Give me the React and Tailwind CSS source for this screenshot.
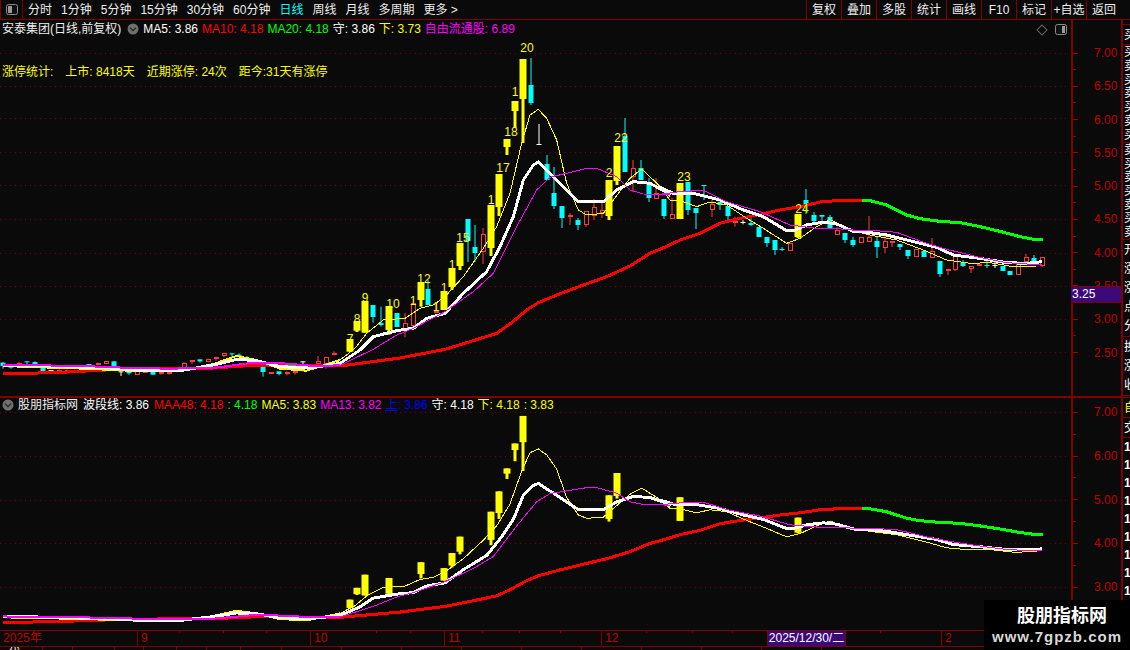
const FONT = { fontFamily: '"Liberation Sans", "Noto Sans CJK SC", sans-serif' };
const z = (ox, oy, pts) => pts.map(([x, y]) => [ox + x / 3, oy + y / 3]);
const Y = '#ffff00', C = '#00ffff', R = '#ff3c3c', W = '#ffffff';

// zoom-space candles: [x, hi, top, bot, lo, type]
const groupLeft = [[10,66,68,78,86,'c'],[34,78,80,80,86,'c'],[58,66,68,74,74,'r'],[82,64,64,66,72,'c'],[106,64,66,74,74,'c'],[130,80,80,96,96,'c'],[154,90,90,91,96,'w'],[178,88,90,96,96,'r'],[202,88,90,96,96,'r'],[268,72,72,80,86,'c'],[295,68,70,76,76,'r'],[319,64,64,72,72,'r'],[343,64,64,88,88,'c'],[364,94,94,95,108,'w'],[388,94,94,100,104,'c'],[412,94,94,104,104,'r'],[436,92,94,94,98,'r'],[460,94,94,104,104,'c'],[484,96,96,100,104,'r'],[508,96,96,96,104,'r'],[553,66,70,84,84,'r'],[577,60,60,66,72,'r'],[601,58,58,64,68,'c'],[625,56,58,66,66,'r'],[648,50,52,58,62,'r'],[673,38,40,48,52,'r'],[697,40,40,42,52,'c'],[718,40,44,50,50,'c'],[742,48,52,60,60,'c'],[766,68,68,74,74,'c'],[790,78,78,96,110,'c'],[814,96,96,102,102,'r'],[838,94,94,102,106,'c'],[862,94,96,102,106,'r'],[886,92,92,96,104,'r'],[908,64,64,94,94,'w'],[955,48,64,72,76,'r'],[979,50,52,72,86,'r'],[1003,34,40,46,46,'r']];
const groupMid = [[61,897,897,935,935,'y'],[82,843,843,872,876,'y'],[106,783,783,878,878,'y'],[130,795,795,831,848,'c'],[154,800,849,855,860,'c'],[178,798,798,870,884,'y'],[202,819,819,861,861,'c'],[226,819,849,870,892,'r'],[250,789,789,858,870,'r'],[272,726,726,780,800,'y'],[295,720,747,795,795,'c'],[319,790,812,819,819,'r'],[343,753,753,810,810,'y'],[367,684,684,741,750,'y'],[391,609,609,678,690,'y'],[415,537,537,603,666,'c'],[436,555,621,639,666,'c'],[460,564,583,636,672,'r'],[484,495,495,624,648,'y'],[508,402,402,501,528,'y'],[532,297,297,321,345,'y'],[556,183,183,213,264,'y'],[580,57,57,177,309,'y'],[604,54,135,189,195,'c'],[628,252,312,314,315,'w'],[650,345,372,420,420,'c'],[673,381,459,498,507,'c'],[697,498,498,534,564,'c'],[721,519,525,531,555,'r'],[745,534,540,555,570,'c'],[769,513,513,555,561,'r'],[793,477,501,528,540,'r'],[815,489,510,519,534,'r'],[838,420,420,528,540,'y'],[862,318,318,423,435,'y'],[886,234,288,396,396,'c'],[910,360,384,411,456,'r'],[934,360,384,420,420,'c'],[958,414,426,474,486,'c'],[979,414,459,477,477,'r']];
const groupRight = [[13,117,117,168,177,'c'],[37,114,162,177,177,'r'],[61,69,69,177,177,'y'],[85,66,66,150,165,'c'],[109,144,144,159,207,'c'],[133,75,75,76,120,'c'],[157,108,132,150,171,'r'],[179,125,125,135,150,'c'],[203,138,138,168,180,'c'],[226,170,184,185,200,'r'],[249,180,186,187,193,'w'],[274,175,189,195,198,'c'],[298,201,201,231,231,'c'],[322,231,231,249,261,'c'],[344,240,240,270,285,'c'],[367,261,267,268,273,'c'],[391,249,249,273,273,'r'],[415,162,162,231,234,'y'],[439,87,120,138,162,'c'],[463,156,165,183,192,'c'],[487,165,165,170,186,'c'],[511,165,171,204,207,'c'],[532,200,210,225,225,'r'],[556,219,219,240,249,'c'],[580,231,240,255,261,'c'],[604,231,231,249,249,'r'],[628,168,231,246,246,'r'],[652,231,243,261,294,'c'],[676,225,243,264,279,'r'],[697,243,243,249,261,'r'],[721,252,252,261,270,'c'],[745,270,270,288,297,'c'],[769,267,267,291,291,'r'],[793,273,273,291,291,'c'],[817,234,273,294,294,'r'],[841,303,303,342,351,'c'],[865,328,328,333,345,'r'],[886,285,285,330,333,'r'],[910,300,307,318,321,'c'],[934,318,318,328,339,'r'],[958,312,312,318,318,'r'],[982,303,315,316,324,'c'],[1006,306,315,316,324,'w'],[1030,318,318,333,333,'c'],[1051,333,333,345,345,'c'],[1075,306,306,345,345,'r'],[1099,282,291,306,306,'r'],[1123,285,294,315,315,'c'],[1147,291,291,318,321,'r']];
const conv = (ox, oy, arr) => arr.map(([x, h, t, b, l, k]) => ({ x: Math.round(ox + x / 3), h: oy + h / 3, t: oy + t / 3, b: oy + b / 3, l: oy + l / 3, k }));
const candles = [...conv(0, 340, groupLeft), ...conv(330, 40, groupMid), ...conv(660, 160, groupRight)];

const redPts = [...z(0,340,[[10,102],[80,100],[180,97],[320,90],[530,84],[640,84],[760,76],[830,76]]), [340,366], [400,358], ...z(330,40,[[345,928],[420,905],[500,880],[545,848],[590,810],[625,788],[680,765],[760,735],[830,710],[900,678],[960,640],[1020,615]]), ...z(660,160,[[0,268],[60,240],[120,220],[180,190],[240,175],[300,163],[360,150],[420,140],[480,126],[540,121],[605,122]])];
const greenPts = z(660,160,[[605,122],[630,122],[680,135],[740,165],[780,176],[840,184],[900,188],[960,200],[1020,214],[1080,230],[1120,238],[1148,240]]);
const greenShort = z(0,340,[[838,78],[930,78]]);
const whiteLeft = z(0,340,[[10,76],[100,76],[200,80],[330,84],[430,92],[540,92],[640,75],[710,58],[770,62],[840,80],[930,84],[1020,70]]);
const whitePts = [...whiteLeft, ...z(330,40,[[90,930],[130,890],[200,872],[250,865],[290,835],[345,820],[400,760],[470,695],[510,620],[550,530],[580,420],[610,375],[625,366],[680,420],[745,485],[820,485],[860,450],[910,425],[960,430],[1020,462]]), ...z(660,160,[[0,82],[40,100],[100,100],[180,120],[250,150],[310,170],[380,212],[400,212],[440,195],[490,186],[530,192],[580,214],[630,218],[680,225],[760,245],[830,262],[880,285],[960,295],[1040,308],[1100,310],[1147,305]])];
const yellowLeft = z(0,340,[[10,78],[120,82],[200,84],[340,90],[430,94],[540,92],[640,72],[710,48],[770,60],[840,86],[920,92],[1020,60]]);
const yellowPts = [...yellowLeft, ...z(330,40,[[75,925],[110,880],[160,840],[225,835],[270,805],[310,795],[345,770],[400,710],[460,625],[500,560],[540,460],[575,310],[600,225],[625,208],[650,235],[680,300],[710,430],[745,510],[770,525],[820,520],[850,480],[900,415],[935,387],[970,420],[1020,470]]), ...z(660,160,[[0,80],[30,120],[70,125],[110,140],[150,126],[200,135],[260,175],[310,205],[380,250],[420,235],[470,200],[510,178],[570,210],[630,225],[710,240],[790,270],[860,300],[930,310],[990,308],[1060,320],[1130,318]])];
const magentaLeft = z(0,340,[[10,74],[120,76],[250,78],[340,82],[500,86],[640,84],[760,68],[850,70],[940,78],[1020,76]]);
const magentaPts = [...magentaLeft, ...z(330,40,[[130,928],[200,885],[250,865],[345,815],[430,755],[490,700],[560,560],[620,450],[660,412],[770,385],[800,385],[860,410],[900,450],[940,462],[1020,465]]), ...z(660,160,[[0,103],[60,95],[130,91],[200,125],[300,155],[390,195],[470,205],[520,205],[600,212],[660,213],[710,217],[800,250],[860,268],[950,290],[1040,308],[1100,312],[1147,312]])];

const labels = [['7',350,339],['8',357,319],['9',365,298],['10',393,304],['1',413,301],['12',424,279],['1',436,307],['1',444,288],['1',452,265],['15',463,238],['1',491,200],['17',503,168],['18',511,132],['1',515,92],['20',527,48],['2',609,173],['22',621,138],['23',684,177],['24',802,209]];

const Line = ({ pts, map, color, w }) => (
  <polyline points={pts.map(([x, y]) => `${x},${map(y)}`).join(' ')} fill="none" stroke={color} strokeWidth={w} strokeLinejoin="round" shapeRendering="crispEdges" />
);

function Candle({ c, map }) {
  const t = map(c.t), b = map(c.b), h = map(c.h), l = map(c.l);
  if (c.k === 'y') return (<g fill={Y}><rect x={c.x - 3.5} y={t} width={7} height={Math.max(b - t, 1)} /><rect x={c.x - 1.5} y={h} width={3} height={Math.max(l - h, 1)} /></g>);
  if (c.k === 'c') return (<g fill={C}><rect x={c.x - 0.5} y={h} width={1} height={Math.max(l - h, 1)} /><rect x={c.x - 2.5} y={t} width={5} height={Math.max(b - t, 1)} /></g>);
  if (c.k === 'w') return (<g fill={W}><rect x={c.x - 0.5} y={h} width={1} height={Math.max(l - h, 1)} /><rect x={c.x - 2.5} y={t} width={5} height={1} /></g>);
  return (<g><rect x={c.x - 0.5} y={h} width={1} height={Math.max(l - h, 1)} fill={R} /><rect x={c.x - 2} y={t + 0.5} width={4} height={Math.max(b - t - 1, 1)} fill="#0a0a0a" stroke={R} strokeWidth={1} shapeRendering="crispEdges" /></g>);
}

const mainMap = (y) => y - 20;
const lowMap = (y) => 412 + (y - 53) * 0.656 - 398;

function Chart({ height, map, grid, lower }) {
  const list = lower ? candles.filter((c) => c.k === 'y') : candles;
  return (
    <svg className="absolute left-0 top-0" width={1071} height={height} viewBox={`0 0 1071 ${height}`} style={FONT}>
      {grid.map((y) => (<line key={y} x1={0} x2={1066} y1={y + 0.5} y2={y + 0.5} stroke="#7a0000" strokeWidth={1} strokeDasharray="1 4" />))}
      {list.map((c, i) => (<Candle key={i} c={c} map={map} />))}
      <Line pts={redPts} map={map} color="#ff0000" w={3} />
      <Line pts={greenPts} map={map} color="#00ff00" w={3} />
      <Line pts={greenShort} map={map} color="#00ff00" w={2} />
      <Line pts={yellowPts} map={map} color="#ffff00" w={1} />
      <Line pts={yellowLeft} map={map} color="#ffff00" w={2} />
      <Line pts={whitePts} map={map} color="#ffffff" w={3} />
      <Line pts={magentaPts} map={map} color="#ff00ff" w={1} />
      <Line pts={magentaLeft} map={map} color="#ff00ff" w={2} />
      {!lower && labels.map(([t, x, y], i) => (<text key={i} x={x} y={map(y) + 4} textAnchor="middle" fontSize={12} fill={Y}>{t}</text>))}
    </svg>
  );
}

function Axis({ values, half, pad }) {
  return (
    <div className="relative w-[50px] shrink-0 border-l-2 border-[#800000]" style={{ paddingTop: pad }}>
      {values.map((v, i) => (
        <div key={v}>
          <div className="flex items-center" style={{ height: half }}>
            <div className="h-px w-[5px] bg-[#a00000]" />
            <div className="ml-[16px] text-[12px] leading-none text-[#c00000]">{v}</div>
          </div>
          {i < values.length - 1 && (
            <div className="flex items-center" style={{ height: half }}>
              <div className="h-px w-[3px] bg-[#a00000]" />
            </div>
          )}
        </div>
      ))}
    </div>
  );
}

const ToggleIcon = ({ flip }) => (
  <svg width="12" height="11" viewBox="0 0 12 11">
    <rect x="0.5" y="0.5" width="11" height="10" rx="2" fill="#111" stroke="#8a8a8a" />
    {flip ? <rect x="2" y="2" width="4" height="7" fill="#9a9a9a" /> : <rect x="7" y="2" width="3" height="7" fill="#9a9a9a" />}
  </svg>
);
const Chevron = () => (
  <svg width="12" height="12" viewBox="0 0 12 12">
    <circle cx="6" cy="6" r="5.5" fill="#6f6f6f" />
    <path d="M3 4.7 L6 7.7 L9 4.7" fill="none" stroke="#222" strokeWidth="1.2" />
  </svg>
);

const left = [['分时', false], ['1分钟', false], ['5分钟', false], ['15分钟', false], ['30分钟', false], ['60分钟', false], ['日线', true], ['周线', false], ['月线', false], ['多周期', false], ['更多 >', false]];
const right = ['复权', '叠加', '多股', '统计', '画线', 'F10', '标记', '+自选', '返回'];

function Toolbar() {
  return (
    <div className="flex h-[20px] shrink-0 items-stretch border-b border-[#800000] text-[12px] text-[#eeeeee]">
      <div className="flex w-[23px] items-center justify-center border-x border-[#800000]"><ToggleIcon flip /></div>
      <div className="ml-[5px] flex items-center gap-[9px]">
        {left.map(([t, on]) => (<span key={t} className={on ? 'text-[#00ffff]' : ''}>{t}</span>))}
      </div>
      <div className="ml-auto flex pr-[9px]">
        {right.map((t) => (<div key={t} className="flex w-[35px] items-center justify-center whitespace-nowrap border-l border-[#800000]">{t}</div>))}
      </div>
    </div>
  );
}

const Sec = ({ h, chars, color = 'text-white' }) => (
  <div className={`flex flex-col justify-around overflow-hidden border-b border-[#800000] pl-px text-[12px] leading-none ${color}`} style={{ height: h }}>
    {chars.split('').map((c, i) => (<span key={i} className="block w-[12px]">{c}</span>))}
  </div>
);

function Sidebar() {
  return (
    <div className="flex w-[9px] shrink-0 flex-col overflow-hidden border-l-2 border-[#800000]">
      <Sec h={5} chars="" />
      <Sec h={20} chars="买" />
      <Sec h={98} chars="买卖买卖买卖买" />
      <Sec h={97} chars="卖买卖买卖买卖" />
      <Sec h={97} chars="开涨涨点分" />
      <Sec h={59} chars="换涨收" />
      <Sec h={2} chars="" />
      <Sec h={20} chars="自" color="text-[#ffff00]" />
      <Sec h={20} chars="交" />
      <div className="flex flex-col gap-[6px] overflow-hidden pl-px pt-[3px] text-[12px] font-bold leading-none text-white">
        {[0, 1, 2, 3, 4, 5, 6, 7, 8, 9].map((i) => (<span key={i} className="block">1</span>))}
      </div>
    </div>
  );
}

function Legend1() {
  return (
    <div className="flex h-[18px] items-center gap-[4px] whitespace-nowrap pl-[2px] text-[12px]">
      <span className="text-[#eeeeee]">安泰集团(日线,前复权)</span>
      <span className="mx-[2px] flex"><Chevron /></span>
      <span className="ml-[-2px] text-white">MA5: 3.86</span>
      <span className="text-[#ff0000]">MA10: 4.18</span>
      <span className="text-[#00ff00]">MA20: 4.18</span>
      <span className="text-white">守: 3.86</span>
      <span className="text-[#ffff00]">下: 3.73</span>
      <span className="text-[#ff00ff]">自由流通股: 6.89</span>
    </div>
  );
}

function Legend2() {
  return (
    <div className="flex h-[14px] items-center gap-[4px] whitespace-nowrap pl-[2px] text-[12px]">
      <Chevron />
      <span className="text-[#eeeeee]">股朋指标网</span>
      <span className="ml-px text-white">波段线: 3.86</span>
      <span className="ml-px text-[#ff0000]">MAA48: 4.18</span>
      <span className="text-[#00ff00]">: 4.18</span>
      <span className="text-[#ffff00]">MA5: 3.83</span>
      <span className="text-[#ff00ff]">MA13: 3.82</span>
      <span className="text-[#0000ff]"><span className="underline">上</span>: 3.86</span>
      <span className="text-white">守: 4.18</span>
      <span className="text-[#ffff00]">下: 4.18</span>
      <span className="text-[#ffff00]">: 3.83</span>
    </div>
  );
}

function TimeAxis() {
  const cells = [['2025年', 137], ['9', 173], ['10', 134], ['11', 157], ['12', 166]];
  const ticks = [179, 223, 266, 376, 410, 482, 519, 560, 646, 692, 732, 880, 1000];
  return (
    <div className="relative flex h-[17px] shrink-0 border-y border-[#800000] text-[12px] leading-[15px] text-[#c00000]">
      {cells.map(([t, w], i) => (
        <div key={t} className={`shrink-0 pl-[3px] ${i ? 'border-l border-[#800000]' : ''}`} style={{ width: w }}>{t}</div>
      ))}
      <div className="w-[79px] shrink-0 whitespace-nowrap border-x border-[#800000] bg-[#3c0a78] text-center text-white">2025/12/30/二</div>
      <div className="w-[95px] shrink-0" />
      <div className="flex-1 border-l border-[#800000] pl-[3px]">2</div>
      <svg className="absolute left-0 top-0" width="1121" height="3">
        {ticks.map((x) => (<rect key={x} x={x} y={0} width={1} height={2} fill="#800000" />))}
      </svg>
    </div>
  );
}

function BottomRow() {
  const cells = [43, 30, 42, 29, 33, 30, 34, 41, 60, 60, 60, 60, 60, 60, 60, 60, 60];
  return (
    <div className="flex flex-1 overflow-hidden text-[12px] leading-[12px] text-white">
      {cells.map((w, i) => (
        <div key={i} className="shrink-0 border-r border-[#800000] pl-[8px]" style={{ width: w }}>{i === 0 ? '代' : ''}</div>
      ))}
    </div>
  );
}

export default function App() {
  const mainGrid = [33, 66, 98, 132, 165, 199, 233, 266, 299, 332];
  const lowGrid = [14, 58, 102, 145, 189];
  return (
    <div className="relative flex h-[650px] w-[1130px] flex-col overflow-hidden bg-[#0a0a0a]" style={FONT}>
      <Toolbar />
      <div className="flex min-h-0 flex-1">
        <div className="flex w-[1121px] shrink-0 flex-col">
          <div className="flex h-[376px] shrink-0">
            <div className="relative flex-1">
              <Chart height={376} map={mainMap} grid={mainGrid} />
              <div className="relative">
                <Legend1 />
                <div className="mt-[27px] flex h-[14px] items-center gap-[12px] whitespace-nowrap pl-[2px] text-[12px] text-[#ffff00]">
                  <span>涨停统计:</span><span>上市: 8418天</span><span>近期涨停: 24次</span><span>距今:31天有涨停</span>
                </div>
              </div>
              <div className="absolute right-[4px] top-[4px] flex items-center gap-[9px]">
                <span className="block h-[8px] w-[8px] rotate-45 border border-[#666666]" />
                <ToggleIcon />
              </div>
            </div>
            <div className="relative flex">
              <Axis values={['7.00', '6.50', '6.00', '5.50', '5.00', '4.50', '4.00', '3.50', '3.00', '2.50']} half={16.65} pad={24.7} />
              <div className="absolute left-0 top-[266px] h-[17px] w-[50px] border-y border-[#800000] bg-[#3c0a78] pl-px text-[12px] leading-[15px] text-white">3.25</div>
            </div>
          </div>
          <div className="h-[2px] shrink-0 bg-[#800000]" />
          <div className="flex h-[232px] shrink-0 overflow-hidden">
            <div className="relative flex-1">
              <Chart height={232} map={lowMap} grid={lowGrid} lower />
              <div className="relative"><Legend2 /></div>
            </div>
            <Axis values={['7.00', '6.00', '5.00', '4.00', '3.00']} half={21.85} pad={3.5} />
          </div>
          <TimeAxis />
          <BottomRow />
        </div>
        <Sidebar />
      </div>
      <div className="absolute bottom-0 right-0 flex h-[50px] w-[146px] flex-col items-center justify-center bg-black">
        <div className="ml-[10px] text-[18px] font-bold leading-[24px] text-white">股朋指标网</div>
        <div className="text-[15px] font-bold leading-[18px] tracking-[1px] text-[#d8d8d8]">www.7gpzb.com</div>
      </div>
    </div>
  );
}
